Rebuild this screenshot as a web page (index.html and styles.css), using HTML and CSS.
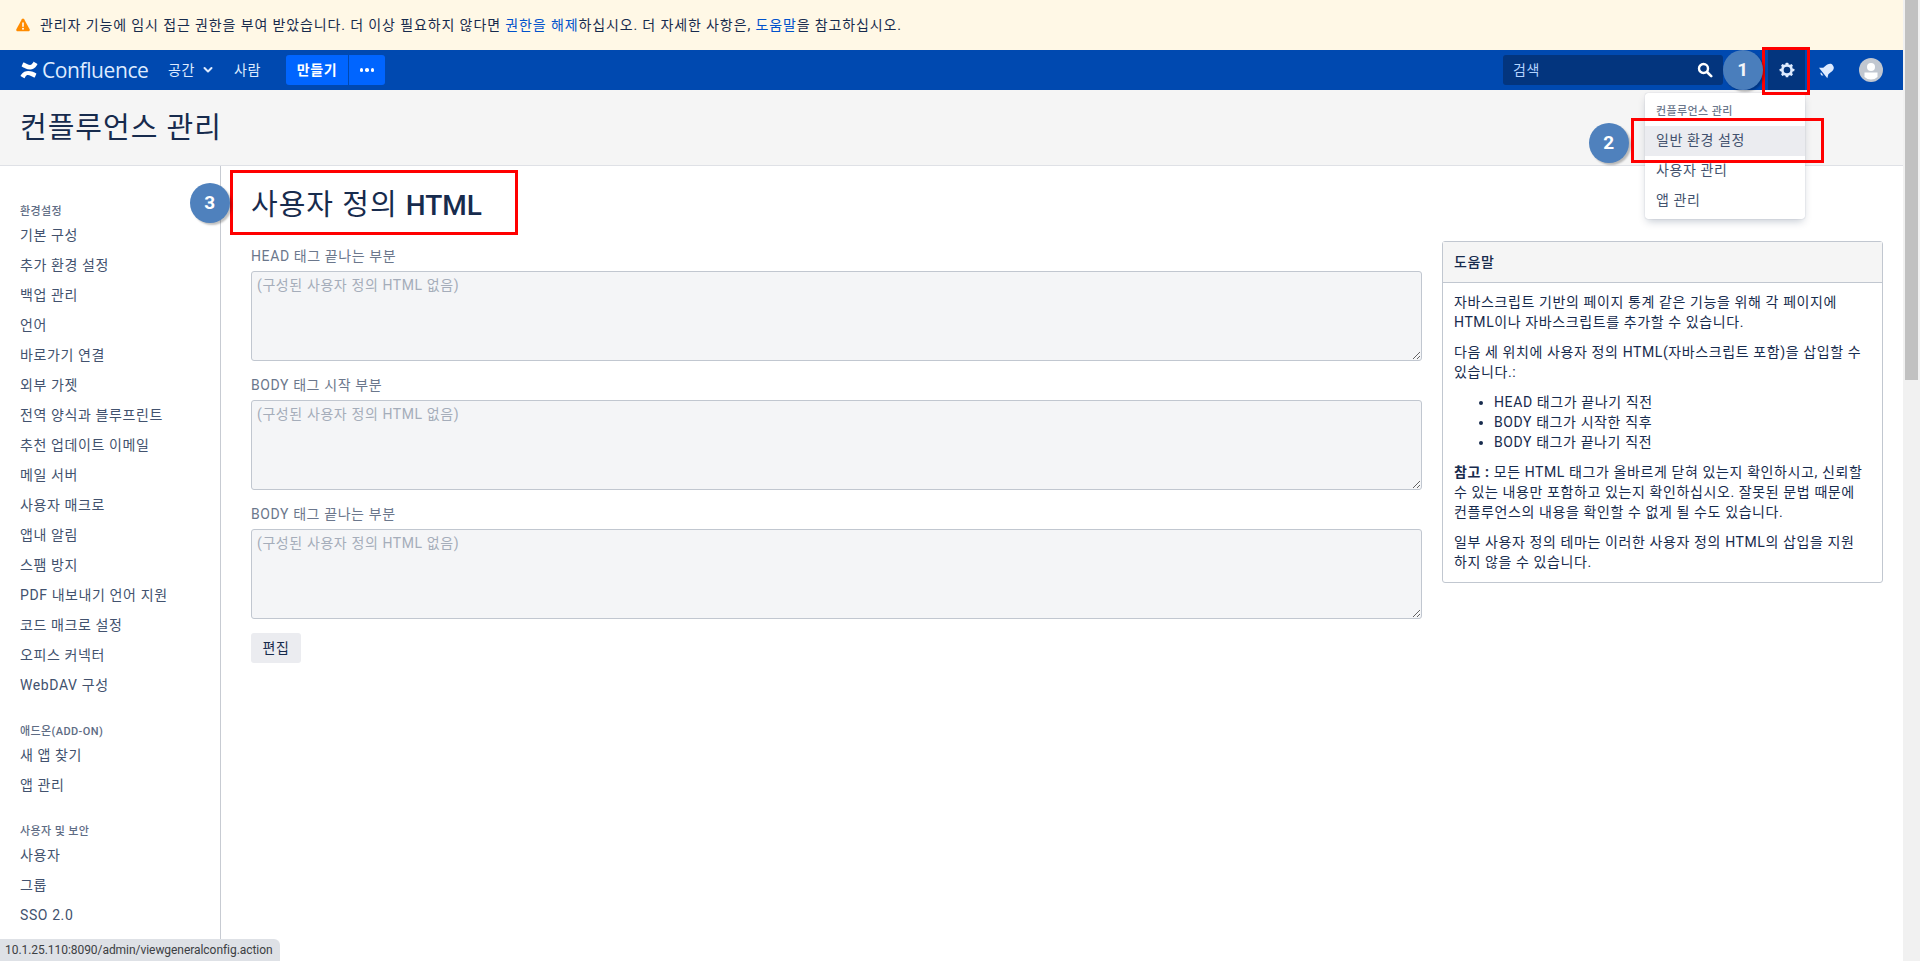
FILE: index.html
```html
<!DOCTYPE html>
<html lang="ko">
<head>
<meta charset="utf-8">
<title>사용자 정의 HTML - 컨플루언스 관리</title>
<link rel="stylesheet" href="styles.css">
</head>
<body>
<div class="window">
  <div class="page">
    <div class="banner">
      <svg class="warn-icon" viewBox="0 0 16 16" width="14" height="14"><path d="M6.7 1.3c.6-1 2-1 2.6 0l6.3 11.6c.5 1-.2 2.1-1.3 2.1H1.7C.6 15-.1 13.900.4 12.900z" fill="#ff8b00"/><rect x="7.100" y="4.800" width="1.800" height="5.400" rx=".9" fill="#fff"/><circle cx="8" cy="12.200" r="1.100" fill="#fff"/></svg>
      <span>관리자 기능에 임시 접근 권한을 부여 받았습니다. 더 이상 필요하지 않다면 <a href="#">권한을 해제</a>하십시오. 더 자세한 사항은, <a href="#">도움말</a>을 참고하십시오.</span>
    </div>

    <header class="nav">
      <div class="brand">
        <svg viewBox="0 0 24 24" width="18" height="18"><path d="M1.500 18.300c-.3.4-.5.9-.6 1.100-.2.400-.1.800.3 1l4 2.400c.4.200.9.100 1.100-.3.200-.3.400-.7.700-1.200 2-3.300 4-2.900 7.700-1.200l4 1.900c.4.200.9 0 1.100-.4l1.900-4.300c.2-.4 0-.9-.4-1.100-.8-.4-2.500-1.200-4-1.900C11.900 12.900 5.700 12.100 1.500 18.300z" fill="#fff"/><path d="M22.500 5.700c.3-.4.500-.9.600-1.100.2-.4.100-.8-.3-1l-4-2.400c-.4-.2-.9-.1-1.100.3-.2.300-.4.700-.7 1.200-2 3.300-4 2.900-7.700 1.200l-4-1.900c-.4-.2-.9 0-1.100.4L2.300 6.700c-.2.400 0 .9.400 1.100.8.400 2.500 1.200 4 1.900 5.400 2.400 11.600 3.200 15.800-4z" fill="#fff"/></svg>
        <span class="brand-name">Confluence</span>
      </div>
      <a class="nav-link" href="#">공간<svg class="chev" viewBox="0 0 10 8" width="10" height="8"><path d="M1.500 2l3.500 3.500L8.500 2" fill="none" stroke="#deebff" stroke-width="2" stroke-linecap="round" stroke-linejoin="round"/></svg></a>
      <a class="nav-link people" href="#">사람</a>
      <div class="create">
        <a class="create-main" href="#">만들기</a>
        <a class="create-more" href="#" aria-label="더 보기"><i></i><i></i><i></i></a>
      </div>
      <div class="nav-right">
        <div class="search">
          <span>검색</span>
          <svg viewBox="0 0 16 16" width="16" height="16"><circle cx="6.500" cy="6.500" r="4.500" fill="none" stroke="#fff" stroke-width="2.400"/><path d="M10 10l4.200 4.200" stroke="#fff" stroke-width="2.600" stroke-linecap="round"/></svg>
        </div>
        <a class="gear-tab" href="#" aria-label="설정">
          <svg viewBox="0 0 24 24" width="16" height="16"><circle cx="12" cy="12" r="7" fill="none" stroke="#deebff" stroke-width="4"/><g fill="#deebff"><rect x="10" y="1" width="4" height="4" rx="1"/><rect x="10" y="19" width="4" height="4" rx="1"/><rect x="1" y="10" width="4" height="4" rx="1"/><rect x="19" y="10" width="4" height="4" rx="1"/><rect x="10" y="1" width="4" height="4" rx="1" transform="rotate(45 12 12)"/><rect x="10" y="19" width="4" height="4" rx="1" transform="rotate(45 12 12)"/><rect x="1" y="10" width="4" height="4" rx="1" transform="rotate(45 12 12)"/><rect x="19" y="10" width="4" height="4" rx="1" transform="rotate(45 12 12)"/></g></svg>
        </a>
        <a class="bell" href="#" aria-label="알림">
          <svg viewBox="0 0 24 24" width="18" height="18"><g fill="#deebff" transform="rotate(52 12 12)"><path d="M12 2C7.800 2 6.500 5.500 6.500 9.500V14l-3.500 4.500h18L17.500 14V9.500C17.500 5.500 16.200 2 12 2z"/><path d="M9.300 20.200a2.800 2.800 0 0 0 5.400 0z"/></g></svg>
        </a>
        <a class="avatar" href="#" aria-label="프로필"><svg viewBox="0 0 24 24" width="24" height="24"><circle cx="12" cy="12" r="12" fill="#c1c7d0"/><circle cx="12" cy="9" r="4" fill="#fff"/><path d="M5.500 14.500h13v4.500a9.600 9.600 0 0 1-13 0z" fill="#fff"/></svg></a>
      </div>
    </header>

    <div class="page-head"><h1>컨플루언스 관리</h1></div>

    <div class="body">
      <aside class="sidebar">
        <h5 class="first">환경설정</h5>
        <a href="#">기본 구성</a>
        <a href="#">추가 환경 설정</a>
        <a href="#">백업 관리</a>
        <a href="#">언어</a>
        <a href="#">바로가기 연결</a>
        <a href="#">외부 가젯</a>
        <a href="#">전역 양식과 블루프린트</a>
        <a href="#">추천 업데이트 이메일</a>
        <a href="#">메일 서버</a>
        <a href="#">사용자 매크로</a>
        <a href="#">앱내 알림</a>
        <a href="#">스팸 방지</a>
        <a href="#">PDF 내보내기 언어 지원</a>
        <a href="#">코드 매크로 설정</a>
        <a href="#">오피스 커넥터</a>
        <a href="#">WebDAV 구성</a>
        <h5>애드온(ADD-ON)</h5>
        <a href="#">새 앱 찾기</a>
        <a href="#">앱 관리</a>
        <h5>사용자 및 보안</h5>
        <a href="#">사용자</a>
        <a href="#">그룹</a>
        <a href="#">SSO 2.0</a>
      </aside>

      <main class="content">
        <h2 class="title">사용자 정의 <b>HTML</b></h2>
        <div class="columns">
          <form class="form">
            <label>HEAD 태그 끝나는 부분</label>
            <textarea readonly>(구성된 사용자 정의 HTML 없음)</textarea>
            <label>BODY 태그 시작 부분</label>
            <textarea readonly>(구성된 사용자 정의 HTML 없음)</textarea>
            <label>BODY 태그 끝나는 부분</label>
            <textarea readonly>(구성된 사용자 정의 HTML 없음)</textarea>
            <button type="button">편집</button>
          </form>
          <section class="help">
            <div class="help-head">도움말</div>
            <div class="help-body">
              <p>자바스크립트 기반의 페이지 통계 같은 기능을 위해 각 페이지에 HTML이나 자바스크립트를 추가할 수 있습니다.</p>
              <p>다음 세 위치에 사용자 정의 HTML(자바스크립트 포함)을 삽입할 수 있습니다.:</p>
              <ul>
                <li>HEAD 태그가 끝나기 직전</li>
                <li>BODY 태그가 시작한 직후</li>
                <li>BODY 태그가 끝나기 직전</li>
              </ul>
              <p><b>참고 :</b> 모든 HTML 태그가 올바르게 닫혀 있는지 확인하시고, 신뢰할 수 있는 내용만 포함하고 있는지 확인하십시오. 잘못된 문법 때문에 컨플루언스의 내용을 확인할 수 없게 될 수도 있습니다.</p>
              <p>일부 사용자 정의 테마는 이러한 사용자 정의 HTML의 삽입을 지원하지 않을 수 있습니다.</p>
            </div>
          </section>
        </div>
      </main>
    </div>

    <div class="menu">
      <div class="menu-head">컨플루언스 관리</div>
      <a class="active" href="#">일반 환경 설정</a>
      <a href="#">사용자 관리</a>
      <a href="#">앱 관리</a>
    </div>

    <div class="mark box-gear"></div>
    <div class="mark box-general"></div>
    <div class="mark box-title"></div>
    <div class="step step-1">1</div>
    <div class="step step-2">2</div>
    <div class="step step-3">3</div>
    <div class="status">10.1.25.110:8090/admin/viewgeneralconfig.action</div>
  </div>
  <div class="scrollbar"><div class="thumb"></div></div>
</div>
</body>
</html>
```

FILE: styles.css
```css
* { box-sizing: border-box; }
html, body { margin: 0; height: 100%; overflow: hidden; }
body {
  font-family: "Roboto", "Noto Sans CJK KR", sans-serif;
  font-size: 14px;
  line-height: 20px;
  letter-spacing: .6px;
  color: #172b4d;
  background: #fff;
}
a { text-decoration: none; color: inherit; }
.window { display: flex; height: 961px; overflow: hidden; }
.page { position: relative; flex: 1; min-width: 0; display: flex; flex-direction: column; overflow: hidden; }
.scrollbar { width: 17px; background: #f1f1f1; flex: none; padding: 0 2px; }
.thumb { height: 380px; background: #c1c1c1; }

.banner { height: 50px; flex: none; background: #fff8e6; display: flex; align-items: center; padding-left: 16px; gap: 10px; letter-spacing: .88px; }
.banner a { color: #0052cc; }
.warn-icon { flex: none; }

.nav { height: 40px; flex: none; background: #0049b0; display: flex; align-items: center; color: #deebff; padding-left: 20px; }
.brand { display: flex; align-items: center; gap: 4px; width: 148px; color: #fff; }
.brand-name { font-size: 21px; line-height: 26px; font-family: "Open Sans", sans-serif; letter-spacing: -.4px; color: #deebff; }
.nav-link { display: flex; align-items: center; gap: 8px; }
.people { margin-left: 21px; }
.create { display: flex; margin-left: 25px; height: 30px; gap: 1px; }
.create-main { width: 62px; background: #0065ff; color: #fff; font-weight: 700; display: flex; align-items: center; justify-content: center; border-radius: 3px 0 0 3px; }
.create-more { width: 36px; background: #0065ff; display: flex; align-items: center; justify-content: center; gap: 2px; border-radius: 0 3px 3px 0; }
.create-more i { width: 3.500px; height: 3.500px; border-radius: 50%; background: #fff; }
.nav-right { margin-left: auto; display: flex; align-items: center; height: 100%; }
.search { width: 220px; height: 30px; background: #03357e; border-radius: 3px; display: flex; align-items: center; justify-content: space-between; padding: 0 10px; color: #b3d4ff; }
.gear-tab { width: 37px; height: 40px; margin-left: 45px; background: #03357e; display: flex; align-items: center; justify-content: center; }
.bell { width: 24px; margin-left: 10px; display: flex; justify-content: center; }
.avatar { margin-left: 20px; margin-right: 20px; display: flex; }

.page-head { height: 76px; flex: none; background: #f5f5f5; border-bottom: 1px solid #dfe1e6; padding: 18px 0 0 20px; }
.page-head h1 { margin: 0; font-size: 29px; line-height: 40px; font-weight: 400; letter-spacing: 1px; }

.body { flex: 1; min-height: 0; display: flex; }
.sidebar { width: 221px; flex: none; border-right: 1px solid #c7cbd2; padding: 0 0 0 20px; overflow: hidden; }
.sidebar h5 { margin: 23px 0 0; height: 17px; line-height: 17px; font-size: 11px; font-weight: 500; color: #5e6c84; letter-spacing: .4px; }
.sidebar h5.first { margin-top: 37px; }
.sidebar a { display: block; height: 30px; line-height: 30px; color: #42526e; white-space: nowrap; }

.content { flex: 1; min-width: 0; padding: 0 20px 0 30px; }
.title { margin: 19px 0 0; font-size: 29px; line-height: 40px; font-weight: 400; letter-spacing: 1px; }
.title b { font-size: 28px; font-weight: 500; letter-spacing: 0; }
.columns { display: flex; gap: 20px; margin-top: 15px; }
.form { flex: 1; min-width: 0; display: flex; flex-direction: column; align-items: flex-start; }
.form label { height: 20px; color: #6b778c; margin-top: 7px; margin-bottom: 5px; line-height: 20px; }
.form label:first-child { margin-top: 5px; }
.form textarea { display: block; width: 100%; height: 90px; margin: 0 0 7px; padding: 3px 5px; background: #f4f5f7; border: 1px solid #c1c7d0; border-radius: 3px; color: #a5adba; font: inherit; letter-spacing: inherit; outline: none; }
.form button { margin-top: 7px; width: 50px; height: 30px; border: 0; border-radius: 3px; background: #ebecf0; color: #172b4d; font: inherit; letter-spacing: inherit; padding: 0; }

.help { width: 441px; flex: none; align-self: flex-start; margin-top: 0; border: 1px solid #c1c7d0; border-radius: 3px; }
.help-head { height: 41px; background: #f5f5f5; border-bottom: 1px solid #c1c7d0; padding: 10px 11px 0; font-weight: 500; }
.help-body { padding: 9px 16px 10px 11px; }
.help-body p { margin: 0 0 10px; }
.help-body p:last-child { margin: 0; }
.help-body ul { margin: 0 0 10px; padding-left: 40px; }

.menu { position: absolute; left: 1645px; top: 93px; width: 160px; height: 126px; background: #fff; border-radius: 3px; box-shadow: 0 4px 8px -2px rgba(9,30,66,.25), 0 0 1px rgba(9,30,66,.31); z-index: 2; padding-top: 8px; }
.menu-head { height: 25px; line-height: 22px; padding-left: 11px; font-size: 11px; font-weight: 500; color: #6b778c; letter-spacing: .4px; }
.menu a { display: block; height: 30px; line-height: 28px; padding-left: 11px; color: #42526e; }
.menu a.active { background: #ebecf0; }

.mark { position: absolute; border: 3px solid #f00; z-index: 3; }
.box-gear { left: 1762px; top: 47px; width: 48px; height: 48px; }
.box-general { left: 1631px; top: 118px; width: 193px; height: 45px; }
.box-title { left: 230px; top: 170px; width: 288px; height: 65px; }

.step { position: absolute; width: 40px; height: 40px; border-radius: 50%; background: #4f81bd; color: #fff; font: 700 19px/40px "Roboto", sans-serif; text-align: center; box-shadow: 2px 2px 2px rgba(0,0,0,.25); z-index: 3; }
.step-1 { left: 1723px; top: 50px; opacity: .95; }
.step-2 { left: 1589px; top: 123px; }
.step-3 { left: 190px; top: 183px; }

.status { position: absolute; left: 0; bottom: 0; width: 280px; height: 22px; line-height: 23px; padding-left: 5px; background: #dee1e6; border-top-right-radius: 6px; font-size: 12px; letter-spacing: -.05px; color: #3c4043; white-space: nowrap; z-index: 4; }
```
